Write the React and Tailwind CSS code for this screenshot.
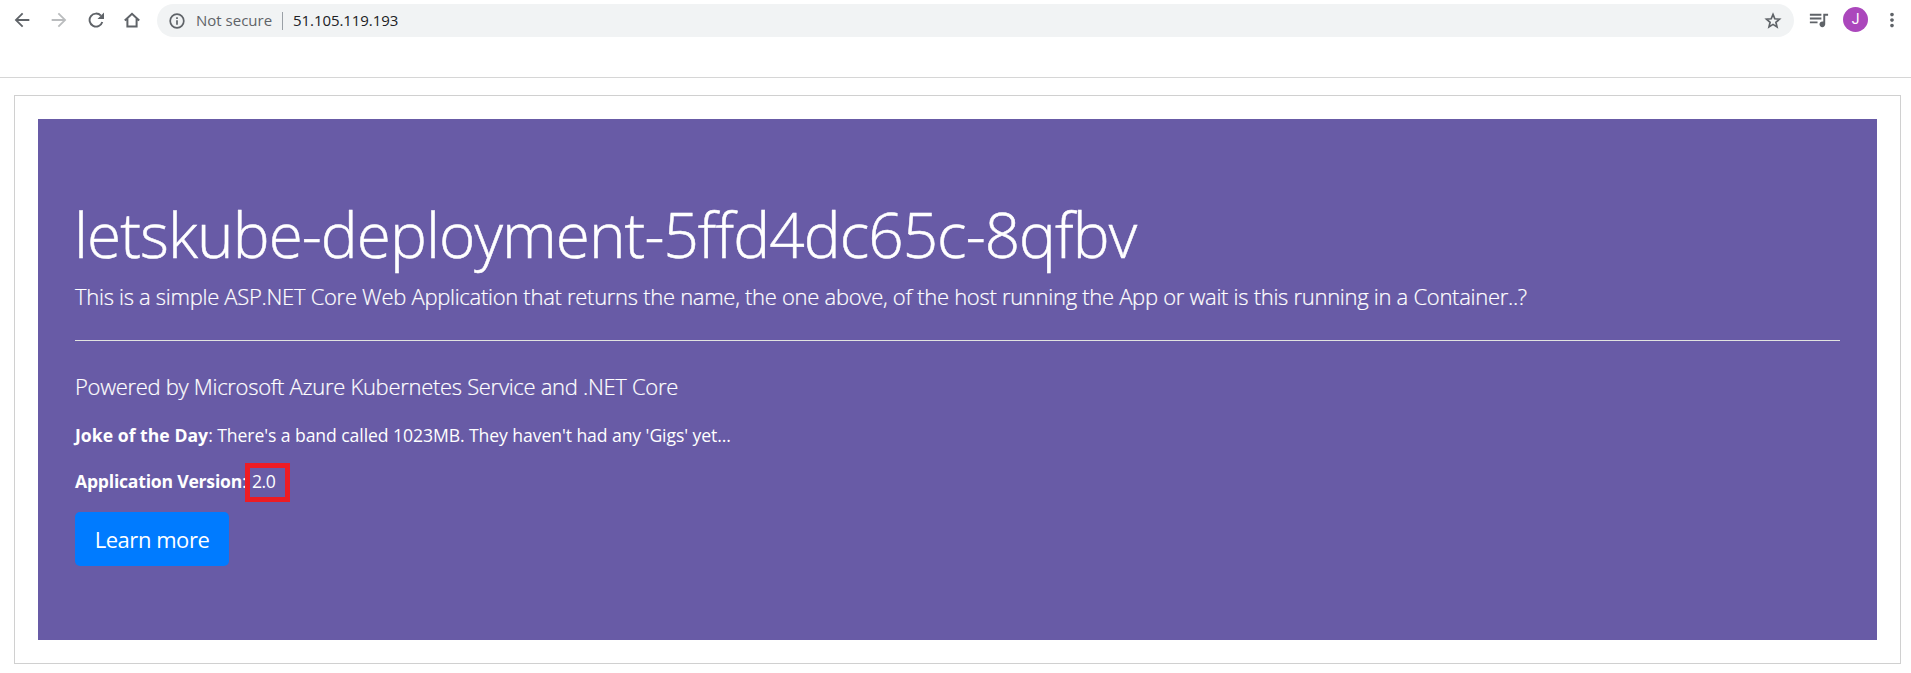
import React from "react";
import { MdArrowBack, MdArrowForward, MdQueueMusic, MdMoreVert } from "react-icons/md";

function HomeIcon() {
  return (
    <svg viewBox="0 0 16 16" className="h-4 w-4" fill="none" stroke="#5f6368" strokeWidth="2">
      <path d="M0.8 8.4 8 1.8l7.2 6.6M3.4 6.8V14.4H12.6V6.8" />
    </svg>
  );
}

function ReloadIcon() {
  return (
    <svg viewBox="0 0 16 16" className="h-4 w-4">
      <path d="M14.3 10A6.5 6.5 0 1 1 12.9 3.7" fill="none" stroke="#5f6368" strokeWidth="1.9" />
      <path d="M16 0.5V7H9.5z" fill="#5f6368" />
    </svg>
  );
}

function InfoIcon() {
  return (
    <svg viewBox="0 0 16 16" className="h-4 w-4" fill="none" stroke="#5f6368">
      <circle cx="8" cy="8" r="6.8" strokeWidth="1.7" />
      <path d="M8 7.2V11.8M8 4.2V6" strokeWidth="1.7" />
    </svg>
  );
}

function StarIcon() {
  return (
    <svg viewBox="0 0 20 20" className="h-5 w-5" fill="none" stroke="#5f6368" strokeWidth="1.7">
      <path d="M10 3.4 11.8 7.8 16.5 8.2 12.9 11.3 14 15.9 10 13.4 6 15.9 7.1 11.3 3.5 8.2 8.2 7.8z" />
    </svg>
  );
}

function BrowserBar() {
  return (
    <header className="flex h-[78px] items-start border-b border-[#d6d6d6] text-[15px] text-[#5f6368]">
      <nav className="flex h-[39px] w-[157px] shrink-0 items-center">
        <MdArrowBack className="ml-[11px] h-[22px] w-[22px]" />
        <MdArrowForward className="ml-[15px] h-[22px] w-[22px] text-[#babcbe]" />
        <span className="ml-[18px]"><ReloadIcon /></span>
        <span className="ml-[20px]"><HomeIcon /></span>
      </nav>
      <div className="mt-1 flex h-[33px] w-[1637px] shrink-0 items-center rounded-full bg-[#f1f3f4] pl-[12px] pr-[11px]">
        <InfoIcon />
        <span className="-mt-px ml-[11px] leading-5">Not secure</span>
        <span className="ml-[10px] h-[18px] w-px bg-[#9aa0a6]" />
        <span className="-mt-px ml-[10px] leading-5 tracking-[-0.08px] text-[#202124]">51.105.119.193</span>
        <span className="ml-auto"><StarIcon /></span>
      </div>
      <div className="flex h-[39px] grow items-center">
        <MdQueueMusic className="ml-[13px] h-[23px] w-[23px]" />
        <span className="ml-[13px] flex h-[25px] w-[25px] items-center justify-center rounded-full bg-[#ab47bc] font-['Roboto'] text-[14px] text-white">J</span>
        <MdMoreVert className="ml-[13px] h-[22px] w-[22px]" />
      </div>
    </header>
  );
}

export default function App() {
  return (
    <div className="h-[673px] w-full overflow-hidden bg-white font-['Open_Sans',sans-serif]">
      <BrowserBar />
      <main className="mt-[17px] mr-[10px] ml-[14px] h-[569px] border border-[#d0d0d0] p-[23px]">
        <section className="h-[521px] bg-[#685ba6] px-[37px] pt-[77px] text-white">
          <h1 className="-ml-px text-[62px] leading-[76px] font-light tracking-[-0.93px] whitespace-nowrap [-webkit-text-stroke:0.5px_white]">
            letskube-deployment-5ffd4dc65c-8qfbv
          </h1>
          <p className="mt-[7px] text-[22px] leading-[34px] font-light tracking-[-0.29px] whitespace-nowrap [-webkit-text-stroke:0.2px_white]">
            This is a simple ASP.NET Core Web Application that returns the name, the one above, of the host running the App or wait is this running in a Container..?
          </p>
          <hr className="mt-[27px] border-t border-[#e1e3e0]" />
          <p className="mt-[28px] text-[22px] leading-[34px] font-light tracking-[-0.3px] [-webkit-text-stroke:0.2px_white]">
            Powered by Microsoft Azure Kubernetes Service and .NET Core
          </p>
          <p className="mt-[19px] text-[17.6px] leading-[27px] tracking-[-0.08px]">
            <strong className="font-bold tracking-[0.03px]">Joke of the Day</strong>: There's a band called 1023MB. They haven't had any 'Gigs' yet...
          </p>
          <p className="mt-[19px] flex h-[27px] text-[17.6px] leading-[27px]">
            <strong className="font-bold tracking-[-0.22px]">Application Version</strong>
            <span className="-mr-[2px] w-[5px]">:</span>
            <span className="z-10 -mt-[5px] h-[39px] w-[45px] border-[5px] border-[#ed1c24] pl-[2px] leading-[27px] tracking-[-0.5px]">2.0</span>
          </p>
          <a className="mt-[17px] flex h-[54px] w-[154px] items-center justify-center rounded-[5px] bg-[#007bff] pt-px text-[22px] tracking-[-0.45px]">
            Learn more
          </a>
        </section>
      </main>
    </div>
  );
}
